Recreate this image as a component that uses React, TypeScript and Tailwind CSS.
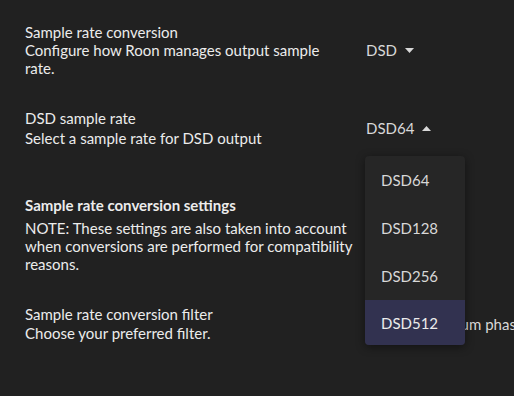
import React from 'react';

function Caret({ up = false }: { up?: boolean }) {
  return (
    <svg width="9" height="5" viewBox="0 0 9 5" className="ml-[8px]">
      {up ? <path d="M0 5 L4.5 0 L9 5 Z" fill="#d8d8d8" /> : <path d="M0 0 L9 0 L4.5 5 Z" fill="#d8d8d8" />}
    </svg>
  );
}

function Row({ children, value, className = '' }: { children: React.ReactNode; value: React.ReactNode; className?: string }) {
  return (
    <div className={`flex items-center ${className}`}>
      <div className="w-[341px] shrink-0 pr-[20px]">{children}</div>
      <div className="flex items-center whitespace-nowrap text-[#d8d8d8]">{value}</div>
    </div>
  );
}

const options = ['DSD64', 'DSD128', 'DSD256', 'DSD512'];

export default function App() {
  return (
    <div
      className="relative w-[514px] h-[396px] overflow-hidden bg-[#212121] text-[#ececec] text-[15px] leading-[18px] px-[25px] pt-[23px]"
      style={{ fontFamily: 'Lato, "Open Sans", sans-serif' }}
    >
      <Row value={<>DSD<Caret /></>}>
        <div>Sample rate conversion</div>
        <div>Configure how Roon manages output sample rate.</div>
      </Row>

      <Row className="mt-[32px]" value={<>DSD64<Caret up /></>}>
        <div>DSD sample rate</div>
        <div className="mt-[2px]">Select a sample rate for DSD output</div>
      </Row>

      <div className="mt-[49px] w-[341px] pr-[10px]">
        <div className="font-bold">Sample rate conversion settings</div>
        <div className="mt-[5px]">NOTE: These settings are also taken into account when conversions are performed for compatibility reasons.</div>
      </div>

      <Row className="mt-[32px]" value={<>Precise, minimum phase</>}>
        <div>Sample rate conversion filter</div>
        <div className="mt-[1px]">Choose your preferred filter.</div>
      </Row>

      <div className="absolute left-[365px] top-[156px] w-[100px] rounded-[4px] bg-[#262626] shadow-[0_2px_10px_rgba(0,0,0,0.45)] overflow-hidden">
        {options.map((o, i) => (
          <div
            key={o}
            className={`flex items-center pl-[16px] text-[15px] ${i === 3 ? 'h-[45px] bg-[#323250] text-[#ececec]' : 'h-[48px] text-[#d8d8d8]'}`}
          >
            {o}
          </div>
        ))}
      </div>
    </div>
  );
}
